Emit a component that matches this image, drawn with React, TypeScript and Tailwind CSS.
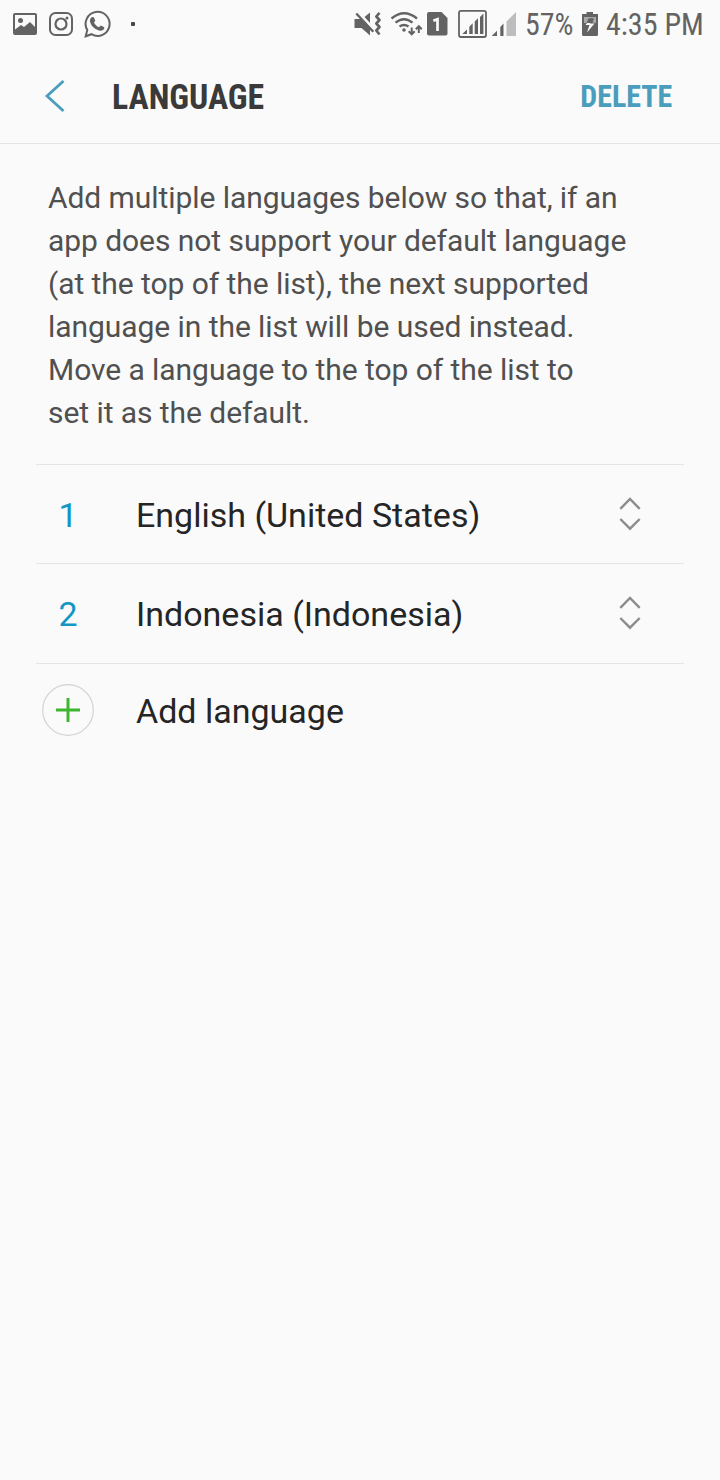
import type { ReactNode } from "react";

const languages = ["English (United States)", "Indonesia (Indonesia)"];

function StatusBar() {
  return (
    <div className="flex h-12 items-center text-[#636363]">
      <svg width="122" height="48" viewBox="0 0 122 48" fill="none" stroke="currentColor" className="shrink-0">
        <path fill="currentColor" stroke="none" fillRule="evenodd" d="M15 13h20a2 2 0 0 1 2 2v18a2 2 0 0 1-2 2H15a2 2 0 0 1-2-2V15a2 2 0 0 1 2-2Zm0 2v14.500l6-4.500 3 2 6-5 5 5V15Z" />
        <circle cx="20.500" cy="20.500" r="2.500" fill="currentColor" stroke="none" />
        <rect x="50" y="13" width="22" height="22" rx="5.500" strokeWidth="2" />
        <circle cx="61" cy="24" r="5.500" strokeWidth="2.200" />
        <circle cx="67" cy="18" r="1.500" fill="currentColor" stroke="none" />
        <path strokeWidth="2" d="m85.700 36.300 1.600-6.300A12 12 0 1 1 91.500 34.200Z" />
        <path fill="currentColor" stroke="none" d="M92.100 17.100c.6-.3 1.500-.2 1.800.4l1.300 3c.2.6-.7 1.500-1.200 2.100.9 2.200 2.700 3.800 5 4.700l1.700-1.900 3.200 1.500c.7.4.5 1.400.1 2.100-1 1.600-3 2-5 1.400-5-1.500-8-5-9-9-.3-1.800.7-3.500 2.100-4.300Z" />
      </svg>
      <span className="ml-[9px] size-1 rounded-[1px] bg-[#454545]" />
      <svg width="171" height="48" viewBox="348 0 171 48" fill="none" stroke="currentColor" className="ml-[213px] shrink-0">
        <path fill="currentColor" stroke="none" d="M354.500 19h6.500l9 9v7.500L361.500 28h-7ZM364.500 17l5.500-4.500V23Z" />
        <path strokeWidth="2.400" d="m356.300 13.500 17 18.200" />
        <path strokeWidth="2.600" strokeLinejoin="round" d="m379.500 12.800-3.200 3.700 3.200 3.500-3.200 3.500 3.200 3.500-3.200 3.500 3.200 4" />
        <path strokeWidth="2.300" d="M391.500 18.500q12.500-10.500 25.500 0M395.500 22.700q8.500-7 17 0M399.500 26.500q4.500-3 9 0" />
        <circle cx="404" cy="30" r="1.800" fill="currentColor" stroke="none" />
        <path strokeWidth="2" d="M411.700 27.500v6.500m-3-2.700 3 3 3-3M418.800 33v-6.500m-3 2.700 3-3 3 3" />
        <path fill="currentColor" stroke="none" d="M429 12h12.500l6 6v15.500a2 2 0 0 1-2 2H429a2 2 0 0 1-2-2V14a2 2 0 0 1 2-2Z" />
        <path stroke="#fafafa" strokeWidth="2.700" d="m433.300 20.700 4.200-1.500V31" />
        <rect x="459" y="10.800" width="27" height="26.200" rx="2" strokeWidth="1.800" />
        <path fill="currentColor" stroke="none" d="m462.300 34 4.700-4.500V34Zm7-7.300 3.400-3.400V34h-3.400Zm5.400-5.200 3.300-3.300V34h-3.300ZM480 17l3.400-3.500V34H480ZM491.700 36l5.300-5.300V36Zm8.600-9 3.200-3.500V36h-3.200Z" />
        <path fill="#bdbdbd" stroke="none" d="m506.500 21.500 9.500-9.500v24h-9.500Z" />
      </svg>
      <span className="ml-1.5 w-[49px] origin-left translate-y-px scale-x-[0.965] whitespace-nowrap font-['Roboto_Condensed','Roboto',sans-serif] text-[31px] leading-[48px]">57%</span>
      <svg width="18" height="26" viewBox="581 11 18 26" className="ml-[7px] shrink-0">
        <path fill="currentColor" d="M586.500 12h6.500v2h5v20.500a1.500 1.500 0 0 1-1.500 1.500h-13a1.500 1.500 0 0 1-1.500-1.500V14h4.500Z" />
        <path fill="#a9a9a9" d="M584 17h12v6h-12Z" />
        <path fill="#636363" d="M588.500 18.500h5.500l-1.500 4h2v1.500h-8.500Z" />
        <path fill="#fafafa" d="m590.500 18.500-5 6.500h4l-2.500 7.500 7.500-9h-4.500Z" />
        <path fill="#636363" d="m589 18.500h4.500l-2 4.500h-4.500Z" />
      </svg>
      <span className="ml-[7px] origin-left translate-y-px scale-x-[0.97] whitespace-nowrap font-['Roboto_Condensed','Roboto',sans-serif] text-[31px] leading-[48px]">4:35 PM</span>
    </div>
  );
}

function ReorderIcon({ className }: { className: string }) {
  return (
    <svg width="24" height="36" viewBox="0 0 24 36" fill="none" stroke="#8c8c8c" strokeWidth="2.4" className={className}>
      <path d="m2.300 12.800 9.700-9.800 9.700 9.800M2.300 23l9.700 9.700 9.700-9.700" />
    </svg>
  );
}

function Row({ lead, label, children }: { lead: ReactNode; label: string; children?: ReactNode }) {
  return (
    <div className="flex h-full items-center pr-[42px]">
      <div className="flex w-16 justify-center">{lead}</div>
      <span className="ml-9 flex-1 text-[34px] leading-10 text-[#252525]">{label}</span>
      {children}
    </div>
  );
}

export default function App() {
  return (
    <div className="h-[1480px] w-[720px] overflow-hidden bg-[#fafafa] font-['Roboto',sans-serif]">
      <StatusBar />
      <header className="flex h-24 items-center border-b border-[#e4e4e4] pr-12 pl-11">
        <svg width="22" height="36" viewBox="0 0 22 36" fill="none" stroke="#4a9dbc" strokeWidth="2.8">
          <path d="M19.500 3 3 18l16.500 15" />
        </svg>
        <h1 className="ml-[46px] origin-left scale-x-[0.965] pt-1 font-['Roboto_Condensed','Roboto',sans-serif] text-[35px] leading-10 font-bold text-[#3a3a3a]">LANGUAGE</h1>
        <button className="ml-auto origin-right scale-x-[0.965] pt-0.5 font-['Roboto_Condensed','Roboto',sans-serif] text-[31px] leading-10 font-bold text-[#4a9dbc]">DELETE</button>
      </header>
      <p className="pt-8 pl-12 text-[30px] leading-[43px] tracking-[-0.06px] text-[#505050]">
        Add multiple languages below so that, if an<br />
        app does not support your default language<br />
        (at the top of the list), the next supported<br />
        language in the list will be used instead.<br />
        Move a language to the top of the list to<br />
        set it as the default.
      </p>
      <ul className="mx-9 mt-[30px]">
        {languages.map((name, i) => (
          <li key={name} className="h-[99px] border-t border-[#e4e4e4] pt-0.5 last:h-[100px] last:pt-0">
            <Row lead={<span className="text-[34px] leading-10 text-[#1296c4]">{i + 1}</span>} label={name}>
              <ReorderIcon className="mb-0.5" />
            </Row>
          </li>
        ))}
      </ul>
      <div className="mx-9 h-[94px] border-t border-[#e4e4e4]">
        <Row
          lead={
            <svg width="52" height="52" viewBox="0 0 52 52" fill="none" className="mb-0.5">
              <circle cx="26" cy="26" r="25.300" stroke="#d2d2d2" strokeWidth="1.200" />
              <path stroke="#3fb62f" strokeWidth="3" d="M14 26h24M26 14v24" />
            </svg>
          }
          label="Add language"
        />
      </div>
    </div>
  );
}
